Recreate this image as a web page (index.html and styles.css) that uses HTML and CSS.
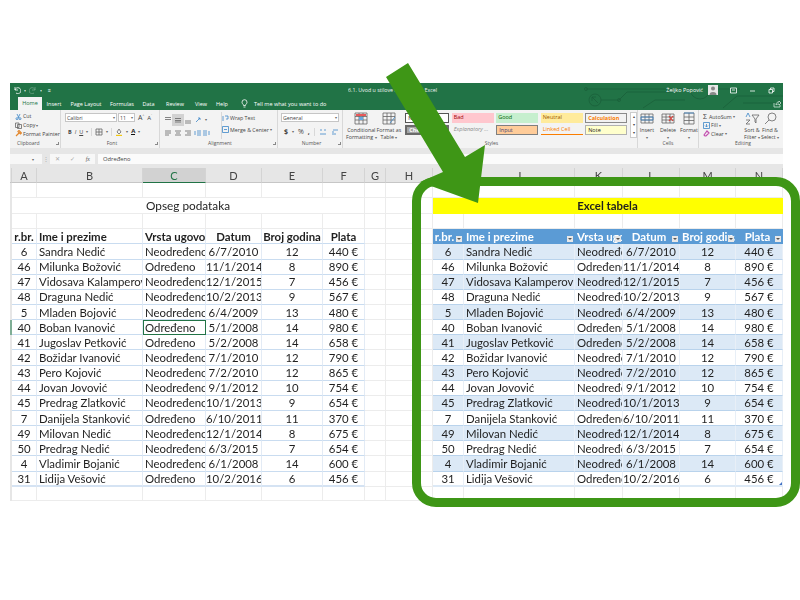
FILE: index.html
```html
<!DOCTYPE html>
<html lang="sr">
<head>
  <meta charset="UTF-8">
  <title>Excel tabela</title>
  <link rel="stylesheet" href="styles.css">
</head>
<body>
  <div class="window">

    <div class="topbar">
      <svg class="circuit" viewBox="0 0 200 27" width="200" height="27">
        <circle cx="12" cy="17" r="6"/><path d="M9 14l6 6M9 14h4M9 14v4"/>
        <path d="M3 6h104M18 17h18l8-8h50M60 25l12-8h30M107 6a10 10 0 1 0 20 0M127 6h30M140 25l14-12h46M160 20h40"/>
        <circle cx="3" cy="6" r="1.5"/><circle cx="36" cy="17" r="1.5"/>
      </svg>
      <div class="titlerow">
        <div class="quick">
          <svg width="8" height="8" viewBox="0 0 8 8"><path d="M2 1v3h3M2 4a3 3 0 1 1 1 3"/></svg>
          <span class="dim">▾</span>
          <svg class="faint" width="8" height="8" viewBox="0 0 8 8"><path d="M6 1v3H3M6 4a3 3 0 1 0-1 3"/></svg>
          <span class="dim">▾</span>
          <span class="plus">≡</span>
        </div>
        <div class="doc">6.1. Uvod u stilove kao tabele - Excel</div>
        <div class="user">
          <span>Željko Popović</span>
          <svg class="avatar" width="10" height="10" viewBox="0 0 10 10"><rect width="10" height="10" fill="#e8e8e8"/><circle cx="5" cy="3.6" r="2" fill="#888"/><path d="M1.5 10a3.5 3 0 0 1 7 0z" fill="#888"/></svg>
          <svg class="winbtn" width="7" height="7" viewBox="0 0 7 7"><path d="M.5 1h6v5h-6zM2 3h3"/></svg>
          <svg class="winbtn" width="7" height="7" viewBox="0 0 7 7"><path d="M1 4h5"/></svg>
          <svg class="winbtn" width="7" height="7" viewBox="0 0 7 7"><path d="M1 2.500h3.500v3.500H1zM2.500 2.500V1H6v3.500H4.500"/></svg>
        </div>
      </div>
      <div class="tabs">
        <span class="tab tab-on">Home</span>
        <span class="tab">Insert</span>
        <span class="tab">Page Layout</span>
        <span class="tab">Formulas</span>
        <span class="tab">Data</span>
        <span class="tab">Review</span>
        <span class="tab">View</span>
        <span class="tab">Help</span>
        <svg class="bulb" width="7" height="9" viewBox="0 0 7 9"><path d="M2.500 8h2M2.500 6.500C2.500 5 1 5 1 3.200a2.500 2.500 0 0 1 5 0C6 5 4.500 5 4.500 6.500z"/></svg>
        <span class="tab tell">Tell me what you want to do</span>
        <svg class="share" width="8" height="8" viewBox="0 0 8 8"><path d="M1 3v4h6V5M3 5c0-2 1-3 3-3V1l2 2-2 2V4C5 4 4 4 3 5z"/></svg>
      </div>
    </div>

    <div class="ribbon">
      <div class="group g-clip">
        <div class="body stack">
          <div class="line"><svg width="7" height="7" viewBox="0 0 7 7"><path class="blue" d="M2 1l2 4M5 1L3 5"/><circle class="blue" cx="2" cy="5.700" r="1"/><circle class="blue" cx="5" cy="5.700" r="1"/></svg>Cut</div>
          <div class="line"><svg width="7" height="7" viewBox="0 0 7 7"><path d="M.5 1h3.500v4.500H.5zM2.500 2.500H6.500V6.500H2.500z"/></svg>Copy <i>▾</i></div>
          <div class="line"><svg width="7" height="7" viewBox="0 0 7 7"><path class="orange" d="M1 6l3-3M3 1.500l2.500 2.500 1-1L4 .5z"/></svg>Format Painter</div>
        </div>
        <div class="label left">Clipboard<b></b></div>
      </div>

      <div class="group g-font">
        <div class="body stack roomy">
          <div class="line">
            <span class="field f-name">Calibri<i>▾</i></span>
            <span class="field f-size">11<i>▾</i></span>
            <span class="big">A<sup>^</sup></span><span class="big small">A<sup>ˇ</sup></span>
          </div>
          <div class="line tools">
            <strong>B</strong><em>I</em><u>U</u><i>▾</i><s class="sep"></s>
            <svg width="8" height="8" viewBox="0 0 8 8"><path d="M1 1h6v6H1zM1 4h6M4 1v6"/></svg><i>▾</i><s class="sep"></s>
            <svg width="8" height="8" viewBox="0 0 8 8"><path d="M2 4l2-3 2 3-2 2z"/><path class="yellow" d="M1 7.500h6"/></svg><i>▾</i>
            <span class="colora">A</span><i>▾</i>
          </div>
        </div>
        <div class="label">Font<b></b></div>
      </div>

      <div class="group g-align">
        <div class="body">
          <div class="aligns">
            <svg width="8" height="8" viewBox="0 0 8 8"><path d="M1 1.500h6M1 3.500h6"/></svg>
            <svg class="on" width="8" height="8" viewBox="0 0 8 8"><path d="M1 2.500h6M1 4.500h6M1 6h6"/></svg>
            <svg width="8" height="8" viewBox="0 0 8 8"><path d="M1 5h6M1 7h6"/></svg>
            <svg width="8" height="8" viewBox="0 0 8 8"><path class="blue" d="M2 6l4-4M4 2h2v2"/></svg>
            <i>▾</i>
            <svg width="8" height="8" viewBox="0 0 8 8"><path d="M1 2h6M1 4h6M1 6h4"/></svg>
            <svg width="8" height="8" viewBox="0 0 8 8"><path d="M1 2h6M2 4h4M1 6h6"/></svg>
            <svg width="8" height="8" viewBox="0 0 8 8"><path d="M1 2h6M3 4h4M1 6h6"/></svg>
            <svg width="8" height="8" viewBox="0 0 8 8"><path class="blue" d="M1 2v4M3 2h4M3 4h4M3 6h4"/></svg>
            <svg width="8" height="8" viewBox="0 0 8 8"><path class="blue" d="M7 2v4M1 2h4M1 4h4M1 6h4"/></svg>
          </div>
          <div class="stack wrapbox">
            <div class="line"><svg width="7" height="7" viewBox="0 0 7 7"><path class="blue" d="M1 1v5M3 1h3v3H4"/></svg>Wrap Text</div>
            <div class="line"><svg width="7" height="7" viewBox="0 0 7 7"><path class="blue" d="M.5.5h6v6h-6zM2 3.500h3"/></svg>Merge &amp; Center <i>▾</i></div>
          </div>
        </div>
        <div class="label">Alignment<b></b></div>
      </div>

      <div class="group g-number">
        <div class="body stack roomy">
          <div class="line"><span class="field f-fmt">General<i>▾</i></span></div>
          <div class="line tools numtools">
            <strong>$</strong><i>▾</i><span>%</span><strong>,</strong><s class="sep"></s>
            <svg width="8" height="8" viewBox="0 0 8 8"><path class="blue" d="M1 2h2M5 2h2M1 6h6"/></svg>
            <svg width="8" height="8" viewBox="0 0 8 8"><path class="blue" d="M2 2h5M1 6h4M1 4h2"/></svg>
          </div>
        </div>
        <div class="label">Number<b></b></div>
      </div>

      <div class="group g-styles">
        <div class="body">
          <div class="bigbtn w-cond">
            <svg width="14" height="13" viewBox="0 0 14 13"><path d="M1 1h12v11H1zM1 4.500h12M1 8h12M5 1v11M9 1v11"/><rect class="fillred" x="2" y="2" width="10" height="2"/><rect class="fillblue" x="5" y="5" width="4" height="3"/></svg>
            <span>Conditional<br>Formatting <i>▾</i></span>
          </div>
          <div class="bigbtn w-fmt">
            <svg width="14" height="13" viewBox="0 0 14 13"><path d="M1 1h12v11H1zM1 4.500h12M1 8h12M5 1v11M9 1v11"/><path class="blue" d="M8 11l5-6"/></svg>
            <span>Format as<br>Table <i>▾</i></span>
          </div>
          <div class="styles">
            <span class="st st-normal">Normal</span>
            <span class="st st-bad">Bad</span>
            <span class="st st-good">Good</span>
            <span class="st st-neutral">Neutral</span>
            <span class="st st-calc">Calculation</span>
            <span class="st st-check">Check Cell</span>
            <span class="st st-expl">Explanatory ...</span>
            <span class="st st-input">Input</span>
            <span class="st st-linked">Linked Cell</span>
            <span class="st st-note">Note</span>
          </div>
          <div class="spin"><span>▴</span><span>▾</span><span>▾</span></div>
        </div>
        <div class="label">Styles</div>
      </div>

      <div class="group g-cells">
        <div class="body cellbtns">
          <div class="bigbtn">
            <svg width="14" height="13" viewBox="0 0 14 13"><path d="M1 2h12v9H1zM1 5h12M1 8h12M5 2v9M9 2v9"/><path class="blue" d="M1 5h12v3H1z"/></svg>
            <span>Insert<br><i>▾</i></span>
          </div>
          <div class="bigbtn">
            <svg width="14" height="13" viewBox="0 0 14 13"><path d="M1 2h12v9H1zM1 5h12M1 8h12M5 2v9M9 2v9"/><path class="red" d="M8 4l4 5M12 4L8 9"/></svg>
            <span>Delete<br><i>▾</i></span>
          </div>
          <div class="bigbtn">
            <svg width="14" height="13" viewBox="0 0 14 13"><path d="M2 1h10v11H2zM2 5h10M2 8.500h10M7 1v11"/><path class="blue" d="M2 1h10"/></svg>
            <span>Format<br><i>▾</i></span>
          </div>
        </div>
        <div class="label">Cells</div>
      </div>

      <div class="group g-edit">
        <div class="body">
          <div class="stack">
            <div class="line"><span class="sigma">Σ</span>AutoSum <i>▾</i></div>
            <div class="line"><svg width="7" height="7" viewBox="0 0 7 7"><path class="blue" d="M.5.5h6v6h-6zM3.500 2v3M2 3.500l1.500 1.500L5 3.500"/></svg>Fill <i>▾</i></div>
            <div class="line"><svg width="7" height="7" viewBox="0 0 7 7"><path class="pink" d="M1 5l3-4 2 2-3 3H2z"/></svg>Clear <i>▾</i></div>
          </div>
          <div class="bigbtn w-sort">
            <svg width="15" height="13" viewBox="0 0 15 13"><path class="blue" d="M1 5l2-4 2 4"/><path d="M1 8h4L1 12h4M7 3h7l-3 4v4l-1-1V7z"/></svg>
            <span>Sort &amp;<br>Filter <i>▾</i></span>
          </div>
          <div class="bigbtn w-sort">
            <svg width="13" height="13" viewBox="0 0 13 13"><circle cx="8" cy="5" r="4"/><path d="M5 8l-4 4"/></svg>
            <span>Find &amp;<br>Select <i>▾</i></span>
          </div>
        </div>
        <div class="label">Editing</div>
      </div>
    </div>

    <div class="formulabar">
      <div class="namebox"><i>▾</i></div>
      <span class="dots">⋮</span>
      <div class="fxbox"><span>✕</span><span>✓</span><em>fx</em></div>
      <div class="fxinput">Određeno</div>
    </div>

    <table class="sheet">
      <colgroup>
        <col class="c-strip"><col class="c-a"><col class="c-b"><col class="c-c"><col class="c-d"><col class="c-e"><col class="c-f"><col class="c-g">
        <col class="c-h"><col class="c-i"><col class="c-j"><col class="c-k"><col class="c-l"><col class="c-m"><col class="c-n">
      </colgroup>
      <thead>
        <tr class="letters"><th></th><th>A</th><th>B</th><th class="picked">C</th><th>D</th><th>E</th><th>F</th><th>G</th><th>H</th><th>I</th><th>J</th><th>K</th><th>L</th><th>M</th><th>N</th></tr>
      </thead>
      <tbody>
        <tr class="blank"><td class="strip"></td><td></td><td></td><td></td><td></td><td></td><td></td><td></td><td></td><td></td><td></td><td></td><td></td><td></td><td></td></tr>
        <tr class="blank"><td class="strip"></td><td colspan="6" class="heading">Opseg podataka</td><td></td><td></td><td colspan="6" class="heading-yellow">Excel tabela</td></tr>
        <tr class="blank"><td class="strip"></td><td></td><td></td><td></td><td></td><td></td><td></td><td></td><td></td><td></td><td></td><td></td><td></td><td></td><td></td></tr>
        <tr class="row headrow"><td class="strip"></td><td>r.br.</td><td>Ime i prezime</td><td>Vrsta ugovor</td><td>Datum</td><td>Broj godina</td><td>Plata</td><td></td><td></td>
          <td><span class="clip">r.br.</span><b class="filter"></b></td><td><span class="clip">Ime i prezime</span><b class="filter"></b></td><td><span class="clip">Vrsta ugovor</span><b class="filter"></b></td><td><span class="clip">Datum</span><b class="filter"></b></td><td><span class="clip">Broj godina</span><b class="filter"></b></td><td><span class="clip">Plata</span><b class="filter"></b></td></tr>
        <tr class="row odd"><td class="strip"></td><td>6</td><td>Sandra Nedić</td><td>Neodređeno</td><td>6/7/2010</td><td>12</td><td>440 €</td><td></td><td></td><td>6</td><td>Sandra Nedić</td><td>Neodređeno</td><td>6/7/2010</td><td>12</td><td>440 €</td></tr>
        <tr class="row"><td class="strip"></td><td>46</td><td>Milunka Božović</td><td>Određeno</td><td>11/1/2014</td><td>8</td><td>890 €</td><td></td><td></td><td>46</td><td>Milunka Božović</td><td>Određeno</td><td>11/1/2014</td><td>8</td><td>890 €</td></tr>
        <tr class="row odd"><td class="strip"></td><td>47</td><td>Vidosava Kalamperović</td><td>Neodređeno</td><td>12/1/2015</td><td>7</td><td>456 €</td><td></td><td></td><td>47</td><td>Vidosava Kalamperović</td><td>Neodređeno</td><td>12/1/2015</td><td>7</td><td>456 €</td></tr>
        <tr class="row"><td class="strip"></td><td>48</td><td>Draguna Nedić</td><td>Neodređeno</td><td>10/2/2013</td><td>9</td><td>567 €</td><td></td><td></td><td>48</td><td>Draguna Nedić</td><td>Neodređeno</td><td>10/2/2013</td><td>9</td><td>567 €</td></tr>
        <tr class="row odd"><td class="strip"></td><td>5</td><td>Mladen Bojović</td><td>Neodređeno</td><td>6/4/2009</td><td>13</td><td>480 €</td><td></td><td></td><td>5</td><td>Mladen Bojović</td><td>Neodređeno</td><td>6/4/2009</td><td>13</td><td>480 €</td></tr>
        <tr class="row"><td class="strip active"></td><td>40</td><td>Boban Ivanović</td><td class="selected">Određeno</td><td>5/1/2008</td><td>14</td><td>980 €</td><td></td><td></td><td>40</td><td>Boban Ivanović</td><td>Određeno</td><td>5/1/2008</td><td>14</td><td>980 €</td></tr>
        <tr class="row odd"><td class="strip"></td><td>41</td><td>Jugoslav Petković</td><td>Određeno</td><td>5/2/2008</td><td>14</td><td>658 €</td><td></td><td></td><td>41</td><td>Jugoslav Petković</td><td>Određeno</td><td>5/2/2008</td><td>14</td><td>658 €</td></tr>
        <tr class="row"><td class="strip"></td><td>42</td><td>Božidar Ivanović</td><td>Neodređeno</td><td>7/1/2010</td><td>12</td><td>790 €</td><td></td><td></td><td>42</td><td>Božidar Ivanović</td><td>Neodređeno</td><td>7/1/2010</td><td>12</td><td>790 €</td></tr>
        <tr class="row odd"><td class="strip"></td><td>43</td><td>Pero Kojović</td><td>Neodređeno</td><td>7/2/2010</td><td>12</td><td>865 €</td><td></td><td></td><td>43</td><td>Pero Kojović</td><td>Neodređeno</td><td>7/2/2010</td><td>12</td><td>865 €</td></tr>
        <tr class="row"><td class="strip"></td><td>44</td><td>Jovan Jovović</td><td>Neodređeno</td><td>9/1/2012</td><td>10</td><td>754 €</td><td></td><td></td><td>44</td><td>Jovan Jovović</td><td>Neodređeno</td><td>9/1/2012</td><td>10</td><td>754 €</td></tr>
        <tr class="row odd"><td class="strip"></td><td>45</td><td>Predrag Zlatković</td><td>Neodređeno</td><td>10/1/2013</td><td>9</td><td>654 €</td><td></td><td></td><td>45</td><td>Predrag Zlatković</td><td>Neodređeno</td><td>10/1/2013</td><td>9</td><td>654 €</td></tr>
        <tr class="row"><td class="strip"></td><td>7</td><td>Danijela Stanković</td><td>Određeno</td><td>6/10/2011</td><td>11</td><td>370 €</td><td></td><td></td><td>7</td><td>Danijela Stanković</td><td>Određeno</td><td>6/10/2011</td><td>11</td><td>370 €</td></tr>
        <tr class="row odd"><td class="strip"></td><td>49</td><td>Milovan Nedić</td><td>Neodređeno</td><td>12/1/2014</td><td>8</td><td>675 €</td><td></td><td></td><td>49</td><td>Milovan Nedić</td><td>Neodređeno</td><td>12/1/2014</td><td>8</td><td>675 €</td></tr>
        <tr class="row"><td class="strip"></td><td>50</td><td>Predrag Nedić</td><td>Neodređeno</td><td>6/3/2015</td><td>7</td><td>654 €</td><td></td><td></td><td>50</td><td>Predrag Nedić</td><td>Neodređeno</td><td>6/3/2015</td><td>7</td><td>654 €</td></tr>
        <tr class="row odd"><td class="strip"></td><td>4</td><td>Vladimir Bojanić</td><td>Neodređeno</td><td>6/1/2008</td><td>14</td><td>600 €</td><td></td><td></td><td>4</td><td>Vladimir Bojanić</td><td>Neodređeno</td><td>6/1/2008</td><td>14</td><td>600 €</td></tr>
        <tr class="row lastrow"><td class="strip"></td><td>31</td><td>Lidija Vešović</td><td>Određeno</td><td>10/2/2016</td><td>6</td><td>456 €</td><td></td><td></td><td>31</td><td>Lidija Vešović</td><td>Određeno</td><td>10/2/2016</td><td>6</td><td>456 €</td></tr>
        <tr class="blank tail"><td class="strip"></td><td></td><td></td><td></td><td></td><td></td><td></td><td></td><td></td><td></td><td></td><td></td><td></td><td></td><td></td></tr>
      </tbody>
    </table>
  </div>

  <!-- green callout on top of the screenshot -->
  <div class="frame"></div>
  <svg class="arrow" width="800" height="600" viewBox="0 0 800 600">
    <polygon points="408,63 386,77 443,172 420,182 478,203 485,145 465,157"/>
  </svg>
</body>
</html>
```

FILE: styles.css
```css
html, body {
  margin: 0;
  height: 600px;
  overflow: hidden;
  background: #ffffff;
}

body {
  position: relative;
  font-family: "Open Sans", "Liberation Sans", sans-serif;
}

svg {
  fill: none;
  stroke: #666666;
  stroke-width: 0.8;
  flex: none;
}

i {
  font-style: normal;
  font-size: 4px;
  color: #666666;
}

.blue { stroke: #3c87c8; }
.red { stroke: #d9403a; stroke-width: 1.2; }
.orange { stroke: #e2862b; stroke-width: 1.2; }
.pink { stroke: #c44fb0; stroke-width: 1.2; }
.yellow { stroke: #f2c811; stroke-width: 1.4; }
.fillred { fill: #e8585a; stroke: none; }
.fillblue { fill: #6aa8e0; stroke: none; }

.window {
  width: 773px;
  margin: 83px 0 0 10px;
  filter: blur(0.35px);
}

/* green title area */
.topbar {
  position: relative;
  height: 27px;
  background: #217346;
  color: #ffffff;
  font-size: 5.5px;
}

.circuit {
  position: absolute;
  top: 0;
  right: 0;
  stroke: #1b5f3a;
}

.titlerow {
  position: relative;
  display: flex;
  align-items: center;
  height: 14px;
}

.titlerow svg { stroke: #ffffff; }

.quick {
  display: flex;
  align-items: center;
  gap: 3px;
  width: 338px;
  padding-left: 3px;
  box-sizing: border-box;
}

.quick .dim { font-size: 4px; opacity: 0.7; }
.quick .faint { opacity: 0.35; }
.quick .plus { margin-left: 3px; font-size: 5px; }

.doc {
  width: 97px;
  white-space: nowrap;
  overflow: hidden;
  font-size: 5.3px;
  opacity: 0.95;
}

.user {
  display: flex;
  align-items: center;
  margin-left: auto;
  padding-right: 8px;
}

.user .avatar { margin: 0 12px 0 5px; stroke: none; }
.user .winbtn { margin-right: 12px; }
.user .winbtn:last-child { margin-right: 0; }

.tabs {
  position: relative;
  display: flex;
  align-items: flex-end;
  height: 13px;
  padding-left: 8px;
}

.tab {
  width: 31px;
  height: 12px;
  line-height: 13px;
  text-align: center;
  white-space: nowrap;
}

.tab:nth-child(3) { width: 40px; }
.tab:nth-child(4) { width: 32px; }
.tab:nth-child(5) { width: 21px; }
.tab:nth-child(6) { width: 32px; }
.tab:nth-child(7) { width: 20px; }
.tab:nth-child(8) { width: 22px; }
.tab:nth-child(2) { width: 24px; }

.tab-on {
  width: 24px;
  background: #f3f3f3;
  color: #217346;
  height: 13px;
}

.bulb { stroke: #ffffff; margin: 0 6px 2px 8px; }
.tell { width: auto; }
.share { stroke: #cfe3d8; margin: 0 2px 2px auto; }

/* ribbon */
.ribbon {
  display: flex;
  height: 38px;
  background: #f3f3f3;
  color: #444444;
  font-size: 5.3px;
}

.group {
  display: flex;
  flex-direction: column;
  box-sizing: border-box;
  border-right: 1px solid #d8d8d8;
}

.body {
  display: flex;
  flex: 1;
  padding-top: 2px;
  min-height: 0;
}

.label {
  position: relative;
  height: 8px;
  line-height: 7px;
  text-align: center;
  font-size: 5px;
  color: #555555;
}

.label.left { text-align: left; padding-left: 2px; }

.label b {
  position: absolute;
  right: 1px;
  top: 2px;
  width: 2px;
  height: 2px;
  border-right: 1px solid #888888;
  border-bottom: 1px solid #888888;
}

.stack {
  display: flex;
  flex-direction: column;
  justify-content: space-between;
  padding-bottom: 2px;
}

.stack.roomy { padding-top: 3px; padding-bottom: 4px; }

.line {
  display: flex;
  align-items: center;
  gap: 1px;
  height: 9px;
  white-space: nowrap;
}

.g-clip { width: 51px; padding-left: 5px; }
.g-font { width: 99px; padding-left: 4px; }
.g-align { width: 118px; padding-left: 3px; }
.g-number { width: 65px; padding-left: 3px; }
.g-styles { width: 295px; padding-left: 3px; }
.g-cells { width: 61px; }
.g-edit { width: 84px; padding-left: 4px; border-right: none; }

.field {
  display: flex;
  justify-content: space-between;
  align-items: center;
  box-sizing: border-box;
  height: 9px;
  padding: 0 1px;
  background: #ffffff;
  border: 1px solid #c6c6c6;
}

.f-name { width: 52px; }
.f-size { width: 17px; }
.f-fmt { width: 58px; }

.big { margin-left: 2px; font-size: 7px; }
.big.small { font-size: 6px; }
.big sup { font-size: 3px; }

.tools { gap: 3px; padding-left: 3px; }
.tools strong, .tools em, .tools u { font-size: 5.5px; }
.tools .sep { width: 1px; height: 8px; background: #d8d8d8; }
.colora { font-size: 6px; font-weight: 700; color: #222222; border-bottom: 1.5px solid #111111; line-height: 6px; }
.numtools { gap: 4px; font-size: 7px; }
.numtools strong, .numtools span { font-size: 7px; }

.aligns {
  display: grid;
  grid-template-columns: repeat(3, 10px) 10px 6px;
  grid-auto-rows: 13px;
  align-items: center;
  justify-items: center;
  width: 58px;
  padding-top: 1px;
}

.aligns svg:nth-child(n+6):nth-child(-n+8) { grid-row: 2; }
.aligns .on { background: #d2d2d2; outline: 2px solid #d2d2d2; }

.wrapbox { border-left: 1px solid #d8d8d8; padding: 2px 0 5px 0; margin-bottom: 1px; padding-left: 0; }
.wrapbox { gap: 3px; justify-content: flex-start; }

.bigbtn {
  display: flex;
  flex-direction: column;
  align-items: center;
  text-align: center;
  line-height: 7px;
  white-space: nowrap;
  gap: 2px;
}

.w-cond { width: 31px; }
.w-fmt { width: 27px; }
.w-sort { width: 18px; }

.styles {
  display: grid;
  grid-template-columns: 44px repeat(4, 42px);
  grid-auto-rows: 10px;
  column-gap: 2.5px;
  row-gap: 2px;
  padding: 2px 3px 0 4px;
  margin-top: -1px;
  font-size: 5.5px;
}

.st {
  box-sizing: border-box;
  padding-left: 2px;
  line-height: 9px;
  white-space: nowrap;
  overflow: hidden;
}

.st-normal { background: #ffffff; border: 1px solid #555555; color: #222222; }
.st-bad { background: #ffc7ce; color: #9c0006; }
.st-good { background: #c6efce; color: #006100; }
.st-neutral { background: #ffeb9c; color: #9c5700; }
.st-calc { background: #f2f2f2; color: #fa7d00; border: 1px solid #8a8a8a; font-weight: 700; }
.st-check { background: #a5a5a5; color: #ffffff; border: 2px solid #6a6a6a; line-height: 6px; font-weight: 700; }
.st-expl { color: #8a8a8a; font-style: italic; }
.st-input { background: #ffcc99; color: #3f3f76; border: 1px solid #7f7f7f; }
.st-linked { color: #fa7d00; border-bottom: 1px solid #fa7d00; }
.st-note { background: #ffffcc; border: 1px solid #b2b2b2; color: #222222; }

.spin {
  display: flex;
  flex-direction: column;
  width: 6px;
  height: 24px;
  border: 1px solid #cccccc;
  background: #ffffff;
  font-size: 4px;
  line-height: 8px;
  text-align: center;
}

.cellbtns { justify-content: center; gap: 4px; }
.cellbtns .bigbtn { width: 17px; }

.g-edit .stack { width: 40px; }
.sigma { font-size: 7px; margin-right: 1px; }

/* formula bar */
.formulabar {
  display: flex;
  align-items: center;
  height: 20px;
  box-sizing: border-box;
  padding: 6px 0 4px 0;
  background: #e6e6e6;
  font-size: 5.8px;
  color: #444444;
}

.namebox {
  display: flex;
  justify-content: flex-end;
  align-items: center;
  align-self: stretch;
  width: 32px;
  padding-right: 8px;
  box-sizing: border-box;
  background: #f7f7f7;
}

.dots { width: 8px; text-align: center; color: #aaaaaa; }

.fxbox {
  display: flex;
  justify-content: space-around;
  align-items: center;
  align-self: stretch;
  width: 45px;
  margin-right: 3px;
  background: #f7f7f7;
  color: #a8a8a8;
}

.fxbox em { color: #555555; font-family: "Liberation Serif", serif; }

.fxinput {
  flex: 1;
  align-self: stretch;
  padding-left: 5px;
  line-height: 10px;
  background: #fbfbfb;
}

/* the sheet */
.sheet {
  width: 773px;
  table-layout: fixed;
  border-collapse: separate;
  border-spacing: 0;
  font-family: Lato, "Liberation Sans", sans-serif;
  font-size: 11.4px;
  color: #1f1f1f;
}

.c-strip { width: 2px; }
.c-a { width: 25px; }
.c-b { width: 106px; }
.c-c { width: 63px; }
.c-d { width: 56px; }
.c-e { width: 61px; }
.c-f { width: 42px; }
.c-g { width: 21px; }
.c-h { width: 47px; }
.c-i { width: 31px; }
.c-j { width: 111px; }
.c-k { width: 48px; }
.c-l { width: 57px; }
.c-m { width: 56px; }
.c-n { width: 47px; }

.sheet th, .sheet td {
  box-sizing: border-box;
  padding: 0;
  overflow: hidden;
  white-space: nowrap;
  border-right: 1px solid #ececec;
  border-bottom: 1px solid #ececec;
}

.letters th {
  height: 15px;
  background: #e6e6e6;
  font-weight: 400;
  font-size: 11px;
  color: #444444;
  border-right: 1px solid #d4d4d4;
  border-bottom: 1px solid #c6c6c6;
}

.letters .picked {
  background: #d2d2d2;
  color: #217346;
  border-bottom: 1px solid #217346;
}

.blank td, .row td { height: 15.15px; }
.tail td { height: 14px; }

.sheet .strip { background: #e6e6e6; border: none; }
.sheet .strip.active { background: #7fae95; }

.sheet .heading {
  text-align: center;
  font-size: 11.8px;
}

.sheet .heading-yellow {
  text-align: center;
  font-weight: 700;
  background: #ffff00;
  border-color: #ffff00;
}

/* column alignment, same for both tables */
.row td { text-align: center; }
.row td:nth-child(3), .row td:nth-child(4),
.row td:nth-child(11), .row td:nth-child(12) {
  text-align: left;
  padding-left: 2px;
}

/* left range */
.row td:nth-child(n+2):nth-child(-n+7) {
  border-right-color: #e3ebf5;
  border-bottom-color: #c9dcf0;
}

.lastrow td:nth-child(n+2):nth-child(-n+7) { border-bottom: 2px solid #d5e3f3; }

.sheet .row .selected {
  outline: 1.5px solid #217346;
  outline-offset: -1.5px;
}

/* right table */
.row td:nth-child(n+10) {
  border-right-color: #e8eff7;
  border-bottom-color: #b9d3ec;
}

.odd td:nth-child(n+10) { background: #dce9f6; }

.lastrow td:nth-child(n+10) { border-bottom: 2px solid #dce9f6; }
.lastrow td:last-child { position: relative; }
.lastrow td:last-child::after {
  content: "";
  position: absolute;
  right: 0;
  bottom: 0;
  border-left: 3px solid transparent;
  border-bottom: 3px solid #4472c4;
}

.headrow td { font-weight: 700; }

.headrow td:nth-child(n+10) {
  position: relative;
  background: #5b9bd5;
  color: #ffffff;
  border-color: #5b9bd5;
}

.headrow td:nth-child(13) { text-align: center; }

.clip {
  display: block;
  overflow: hidden;
}

.headrow td:nth-child(10) .clip { padding-right: 7px; }
.headrow td:nth-child(13) .clip { padding-right: 4px; }
.headrow td:nth-child(14) { text-align: left; padding-left: 2px; }
.headrow td:nth-child(14) .clip { padding-right: 7px; }
.headrow td:nth-child(15) .clip { padding-right: 3px; }

.filter {
  position: absolute;
  right: 1px;
  bottom: 1px;
  box-sizing: border-box;
  width: 6px;
  height: 6px;
  background: #e8e8e8;
}

.filter::after {
  content: "";
  position: absolute;
  left: 1px;
  top: 2px;
  border: 2px solid transparent;
  border-top: 2px solid #555555;
  border-bottom: none;
}

/* callout */
.frame {
  position: absolute;
  left: 412px;
  top: 177px;
  width: 388px;
  height: 330px;
  box-sizing: border-box;
  border: 9.500px solid #3e9616;
  border-radius: 24px;
}

.arrow {
  position: absolute;
  left: 0;
  top: 0;
}

.arrow polygon {
  fill: #3e9616;
  stroke: none;
}
```
